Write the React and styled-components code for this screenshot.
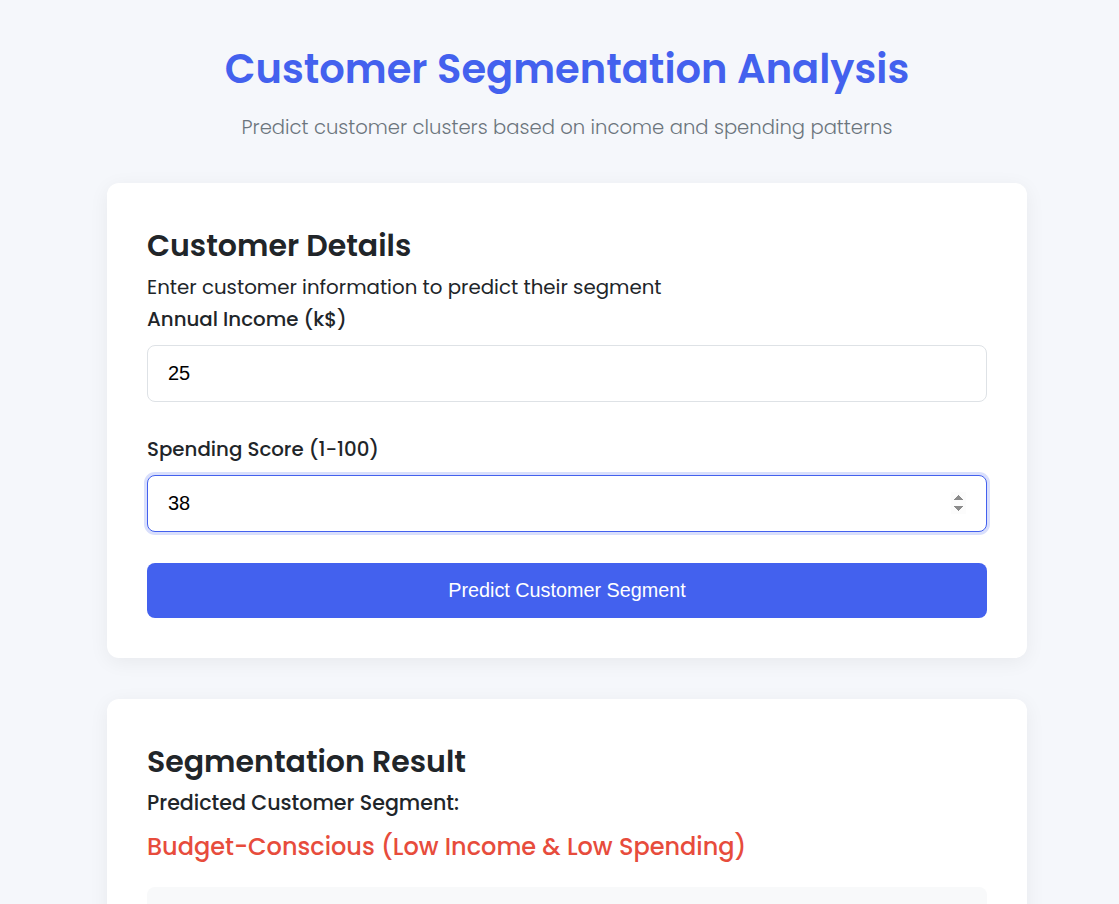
import React from 'react'
import styled, { createGlobalStyle } from 'styled-components'

const GlobalStyle = createGlobalStyle`
  body {
    margin: 0;
    background: #f5f7fb;
    font-family: Poppins, Inter, "Noto Sans", sans-serif;
    color: #212529;
  }
`

export default function App() {
  return (
    <>
      <GlobalStyle />
      <Page>
        <Container>
          <Header>
            <Title>Customer Segmentation Analysis</Title>
            <Subtitle>
              Predict customer clusters based on income and spending patterns
            </Subtitle>
          </Header>

          <Card>
            <CardTitle>Customer Details</CardTitle>
            <Description>
              Enter customer information to predict their segment
            </Description>
            <Field>
              <Label htmlFor="income">Annual Income (k$)</Label>
              <Input id="income" type="number" defaultValue="25" />
            </Field>
            <Field>
              <Label htmlFor="score">Spending Score (1-100)</Label>
              <Input id="score" type="number" defaultValue="38" autoFocus />
            </Field>
            <SubmitButton type="button">Predict Customer Segment</SubmitButton>
          </Card>

          <Card>
            <CardTitle>Segmentation Result</CardTitle>
            <ResultLabel>Predicted Customer Segment:</ResultLabel>
            <Segment>Budget-Conscious (Low Income &amp; Low Spending)</Segment>
            <InfoBox />
          </Card>
        </Container>
      </Page>
    </>
  )
}

// --- STYLES
const Page = styled.div`
  padding: 45px 0 40px 15px;
`

const Container = styled.div`
  max-width: 920px;
  margin: 0 auto;
  display: flex;
  flex-direction: column;
  gap: 41px;
`

const Header = styled.header`
  text-align: center;
  margin-bottom: 1px;
`

const Title = styled.h1`
  margin: 0;
  color: #4361ee;
  font-size: 40px;
  font-weight: 600;
  line-height: 48px;
`

const Subtitle = styled.p`
  margin: 20px 0 0;
  color: #6c757d;
  font-size: 19.6px;
  font-weight: 300;
  line-height: 28px;
`

const Card = styled.section`
  background: #fff;
  border-radius: 12px;
  box-shadow: 0 4px 20px rgba(0, 0, 0, 0.06);
  padding: 47px 40px 40px;
`

const CardTitle = styled.h2`
  margin: 0;
  font-size: 30px;
  font-weight: 600;
  line-height: 32px;
  color: #212529;
`

const Description = styled.p`
  margin: 10px 0 0;
  font-size: 19.8px;
  font-weight: 400;
  line-height: 30px;
`

const Field = styled.div`
  display: flex;
  flex-direction: column;
  margin-bottom: 30px;
`

const Label = styled.label`
  font-size: 19.8px;
  font-weight: 500;
  line-height: 30px;
  margin: 2px 0 11px;
`

const Input = styled.input`
  box-sizing: border-box;
  width: 100%;
  height: 57px;
  padding: 0 20px;
  border: 1px solid #dee2e6;
  border-radius: 8px;
  font-family: "Liberation Sans", Arial, sans-serif;
  font-size: 20px;
  color: #000;
  background: #fff;
  outline: none;

  &:focus {
    border-color: #4361ee;
    box-shadow: 0 0 0 3px rgba(67, 97, 238, 0.2);
  }
`

const SubmitButton = styled.button`
  width: 100%;
  height: 55px;
  margin-top: 1px;
  border: none;
  border-radius: 8px;
  background: #4361ee;
  color: #fff;
  font-family: "Liberation Sans", Arial, sans-serif;
  font-size: 19.8px;
  cursor: pointer;
`

const ResultLabel = styled.p`
  margin: 10px 0 0;
  font-size: 20.6px;
  font-weight: 500;
  line-height: 30px;
`

const Segment = styled.p`
  margin: 11px 0 0;
  color: #e74c3c;
  font-size: 24px;
  font-weight: 500;
  line-height: 36px;
`

const InfoBox = styled.div`
  margin-top: 22px;
  height: 120px;
  background: #f8f9fa;
  border-radius: 8px;
`
